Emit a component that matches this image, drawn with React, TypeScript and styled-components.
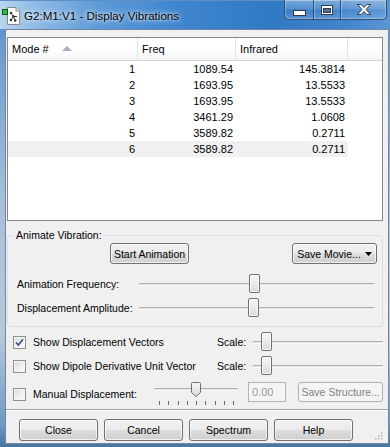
import styled, { createGlobalStyle } from 'styled-components';

const GlobalStyle = createGlobalStyle`
  html, body {
    margin: 0;
    padding: 0;
  }
  body {
    width: 390px;
    height: 447px;
    overflow: hidden;
    font-family: 'Liberation Sans', Arial, sans-serif;
    font-size: 10.5px;
    color: #000;
  }
  * {
    box-sizing: border-box;
  }
`;

const Window = styled.div`
  width: 390px;
  height: 447px;
  display: flex;
  flex-direction: column;
  background: linear-gradient(180deg, #4f8bcb 0%, #6f9dcf 12%, #a9bfd8 45%, #b8c8da 75%, #6f98c2 95%, #45769f 100%);
`;

const TitleBar = styled.div`
  height: 29px;
  flex: none;
  display: flex;
  align-items: flex-start;
  background: linear-gradient(90deg, #b9d5ef 0%, #93bde6 8%, #5e9bd8 25%, #3f86cf 45%, #3279c4 70%, #3f84cc 88%, #5d95d2 100%);
  border-top: 1px solid #5e8fc4;
`;

const TitleIcon = styled.svg`
  margin: 6px 0 0 2px;
  flex: none;
`;

const TitleText = styled.div`
  margin: 7px 0 0 3px;
  font-size: 11.6px;
  line-height: 15px;
  color: #000;
  text-shadow: 0 0 6px rgba(255, 255, 255, 0.95), 0 0 3px rgba(255, 255, 255, 0.8);
`;

const Caption = styled.div`
  margin-left: auto;
  margin-right: 3px;
  margin-top: -1px;
  display: flex;
  height: 20px;
  border: 1px solid #2b4d78;
  border-top: none;
  border-radius: 0 0 5px 5px;
  overflow: hidden;
  box-shadow: inset 0 0 0 1px rgba(255, 255, 255, 0.3);
`;

const CaptionButton = styled.div<{ $w: number }>`
  width: ${(p) => p.$w}px;
  display: flex;
  align-items: center;
  justify-content: center;
  background: linear-gradient(
    180deg,
    rgba(255, 255, 255, 0.32) 0%,
    rgba(255, 255, 255, 0.14) 48%,
    rgba(255, 255, 255, 0.02) 52%,
    rgba(255, 255, 255, 0.16) 100%
  );

  & + & {
    border-left: 1px solid #2b4d78;
    box-shadow: inset 1px 0 rgba(255, 255, 255, 0.3);
  }
`;

const Client = styled.div`
  flex: 1;
  margin: 0 1px 3px 5px;
  background: #f0f0f0;
  border: 1px solid #6f85a2;
  padding: 7px 5px 0 1px;
  display: flex;
  flex-direction: column;
`;

const ListView = styled.div`
  height: 184px;
  flex: none;
  border: 1px solid #828790;
  background: #fff;
  overflow: hidden;
  font-size: 11px;
`;

const HeaderRow = styled.div`
  display: grid;
  grid-template-columns: 130px 98px 112px 1fr;
  height: 23px;
  border-bottom: 1px solid #d5d5d5;
  background: linear-gradient(180deg, #ffffff 0%, #ffffff 55%, #f4f5f7 100%);
`;

const HeaderCell = styled.div<{ $last?: boolean }>`
  display: flex;
  align-items: center;
  padding-left: 4px;
  border-right: ${(p) => (p.$last ? 'none' : '1px solid #e3e4e6')};
`;

const SortArrow = styled.svg`
  margin-left: 13px;
  margin-top: -2px;
`;

const DataRow = styled.div<{ $hot?: boolean }>`
  display: grid;
  grid-template-columns: 130px 98px 112px;
  width: 340px;
  height: 16px;
  line-height: 16px;
  background: ${(p) => (p.$hot ? '#f0f0f0' : 'transparent')};
`;

const DataCell = styled.div`
  text-align: right;
  padding-right: 3px;
`;

const GroupBox = styled.fieldset`
  margin: 8px 0 0 0;
  padding: 1px 0 8px 0;
  border: 1px solid #d5dfe5;
  border-radius: 3px;
  min-width: 0;
`;

const GroupLegend = styled.legend`
  margin-left: 6px;
  padding: 0 2px;
  line-height: 13px;
`;

const ButtonRow = styled.div`
  display: flex;
  justify-content: space-between;
  padding: 0 5px 0 102px;
`;

const Button = styled.button<{ $w: number; $h?: number }>`
  width: ${(p) => p.$w}px;
  height: ${(p) => p.$h ?? 21}px;
  padding: 0;
  font: inherit;
  color: #000;
  border: 1px solid #707070;
  border-radius: 3px;
  background: linear-gradient(180deg, #f2f2f2 0%, #ebebeb 48%, #dddddd 52%, #cfcfcf 100%);
  box-shadow: inset 0 0 0 1px rgba(255, 255, 255, 0.7);
  display: flex;
  align-items: center;
  justify-content: center;
  gap: 4px;

  &:disabled {
    color: #838383;
    border-color: #adb2b5;
    background: #f4f4f4;
    box-shadow: none;
  }
`;

const SliderRow = styled.div<{ $gap: number }>`
  display: grid;
  grid-template-columns: 122px 1fr;
  align-items: center;
  height: 20px;
  margin-top: ${(p) => p.$gap}px;
  padding: 0 8px 0 9px;
`;

const Track = styled.div<{ $h?: number }>`
  position: relative;
  height: ${(p) => p.$h ?? 20}px;
  display: flex;
  align-items: center;
`;

const Channel = styled.div`
  width: 100%;
  height: 3px;
  border-top: 1px solid #b0b0b0;
  border-bottom: 1px solid #fafafa;
  background: #e4e4e4;
`;

const Thumb = styled.div`
  position: absolute;
  top: 0;
  width: 11px;
  height: 19px;
  margin-left: -5px;
  border: 1px solid #707070;
  border-radius: 2px;
  background: linear-gradient(180deg, #f6f6f6 0%, #e9e9e9 50%, #dadada 100%);
  box-shadow: inset 0 0 0 1px rgba(255, 255, 255, 0.8);
`;

const PointerThumb = styled.svg`
  position: absolute;
  top: 0;
  margin-left: -5px;
`;

const Ticks = styled.div`
  display: flex;
  justify-content: space-between;
  padding: 0 4px 0 5px;
  height: 4px;
  margin-top: 4px;
`;

const Tick = styled.div`
  width: 1px;
  height: 4px;
  background: #6a6a6a;
`;

const CheckRow = styled.div<{ $gap: number; $h?: number }>`
  display: flex;
  align-items: center;
  height: ${(p) => p.$h ?? 20}px;
  margin-top: ${(p) => p.$gap}px;
  padding-left: 6px;
`;

const Box = styled.div`
  width: 13px;
  height: 13px;
  flex: none;
  border: 1px solid #8e8f8f;
  background: linear-gradient(135deg, #d8d8d8 0%, #eeeeee 50%, #fbfbfb 100%);
  box-shadow: inset 0 0 0 1px #f6f6f6;
  display: flex;
  align-items: center;
  justify-content: center;
`;

const CheckLabel = styled.div<{ $w: number }>`
  width: ${(p) => p.$w}px;
  flex: none;
  margin-left: 7px;
  white-space: nowrap;
`;

const ScaleLabel = styled.div`
  width: 36px;
  flex: none;
`;

const Grow = styled.div`
  flex: 1;
`;

const ManualBlock = styled.div`
  width: 84px;
  flex: none;
  align-self: flex-start;
`;

const NumberBox = styled.div`
  width: 40px;
  height: 20px;
  margin-left: 10px;
  border: 1px solid #afb4b8;
  background: #f4f4f4;
  color: #9a9a9a;
  padding-left: 3px;
  line-height: 18px;
  align-self: flex-start;
  font-size: 11px;
`;

const Separator = styled.div`
  margin: 3px -5px 0 -1px;
  border-top: 1px solid #a0a0a0;
  border-bottom: 1px solid #ffffff;
`;

const FooterRow = styled.div`
  display: flex;
  gap: 6px;
  margin-top: 8px;
  padding-left: 12px;
  align-items: flex-end;
`;

const Grip = styled.svg`
  margin-left: auto;
  margin-bottom: 1px;
`;

const rows = [
  ['1', '1089.54', '145.3814'],
  ['2', '1693.95', '13.5533'],
  ['3', '1693.95', '13.5533'],
  ['4', '3461.29', '1.0608'],
  ['5', '3589.82', '0.2711'],
  ['6', '3589.82', '0.2711'],
];

const Slider = ({ value }: { value: number }) => (
  <Track>
    <Channel />
    <Thumb style={{ left: `${value * 100}%` }} />
  </Track>
);

const Check = ({ checked }: { checked?: boolean }) => (
  <Box>
    {checked && (
      <svg width="9" height="9" viewBox="0 0 9 9">
        <path d="M1 4.5 L3.4 7 L8 1.2" fill="none" stroke="#3d5289" strokeWidth="1.7" />
      </svg>
    )}
  </Box>
);

export default function App() {
  return (
    <>
      <GlobalStyle />
      <Window>
        <TitleBar>
          <TitleIcon width="19" height="18" viewBox="0 0 19 18">
            <path d="M5.5 0.5 H14 L17.5 4 V17.5 H5.5 Z" fill="#fff" stroke="#8a8a8a" />
            <path d="M14 0.5 V4 H17.5" fill="#e8e8e8" stroke="#8a8a8a" />
            <path d="M9 6 L11.5 9.5 L9 13 M11.5 9.5 L15 9.5 M11.5 9.5 L13 13" fill="none" stroke="#333" strokeWidth="1" />
            <circle cx="9" cy="6" r="1.3" fill="#333" />
            <circle cx="11.5" cy="9.5" r="1.3" fill="#333" />
            <circle cx="9" cy="13" r="1.3" fill="#333" />
            <circle cx="13.2" cy="13.5" r="1.2" fill="#333" />
            <rect x="0.5" y="2.5" width="5" height="5" fill="#22c22e" stroke="#0f5c14" />
          </TitleIcon>
          <TitleText>G2:M1:V1 - Display Vibrations</TitleText>
          <Caption>
            <CaptionButton $w={28}>
              <svg width="13" height="6" viewBox="0 0 13 6" style={{ marginTop: 6 }}>
                <rect x="0.5" y="0.5" width="12" height="5" fill="#fff" stroke="#333c4a" />
              </svg>
            </CaptionButton>
            <CaptionButton $w={27}>
              <svg width="12" height="10" viewBox="0 0 12 10">
                <rect x="0.5" y="0.5" width="11" height="9" fill="#fff" stroke="#333c4a" />
                <rect x="2.5" y="3.5" width="7" height="4" fill="#4a6e98" stroke="#333c4a" />
              </svg>
            </CaptionButton>
            <CaptionButton $w={46}>
              <svg width="14" height="11" viewBox="0 0 14 11">
                <path
                  d="M0.5 0.5 H4 L7 3.5 L10 0.5 H13.5 L9 5.5 L13.5 10.5 H10 L7 7.5 L4 10.5 H0.5 L5 5.5 Z"
                  fill="#fff"
                  stroke="#333c4a"
                  strokeLinejoin="round"
                />
              </svg>
            </CaptionButton>
          </Caption>
        </TitleBar>

        <Client>
          <ListView>
            <HeaderRow>
              <HeaderCell>
                Mode #
                <SortArrow width="10" height="5" viewBox="0 0 10 5">
                  <path d="M0 5 L5 0 L10 5 Z" fill="#a6b0be" />
                </SortArrow>
              </HeaderCell>
              <HeaderCell>Freq</HeaderCell>
              <HeaderCell>Infrared</HeaderCell>
              <HeaderCell $last />
            </HeaderRow>
            {rows.map((r, i) => (
              <DataRow key={r[0]} $hot={i === rows.length - 1}>
                <DataCell>{r[0]}</DataCell>
                <DataCell>{r[1]}</DataCell>
                <DataCell>{r[2]}</DataCell>
              </DataRow>
            ))}
          </ListView>

          <GroupBox>
            <GroupLegend>Animate Vibration:</GroupLegend>
            <ButtonRow>
              <Button $w={79}>Start Animation</Button>
              <Button $w={85}>
                Save Movie...
                <svg width="7" height="4" viewBox="0 0 7 4">
                  <path d="M0 0 H7 L3.5 4 Z" fill="#000" />
                </svg>
              </Button>
            </ButtonRow>
            <SliderRow $gap={10}>
              <span>Animation Frequency:</span>
              <Slider value={0.49} />
            </SliderRow>
            <SliderRow $gap={4}>
              <span>Displacement Amplitude:</span>
              <Slider value={0.485} />
            </SliderRow>
          </GroupBox>

          <CheckRow $gap={5}>
            <Check checked />
            <CheckLabel $w={184}>Show Displacement Vectors</CheckLabel>
            <ScaleLabel>Scale:</ScaleLabel>
            <Grow>
              <Slider value={0.1} />
            </Grow>
          </CheckRow>
          <CheckRow $gap={4}>
            <Check />
            <CheckLabel $w={184}>Show Dipole Derivative Unit Vector</CheckLabel>
            <ScaleLabel>Scale:</ScaleLabel>
            <Grow>
              <Slider value={0.1} />
            </Grow>
          </CheckRow>
          <CheckRow $gap={6} $h={24}>
            <Check />
            <CheckLabel $w={121}>Manual Displacement:</CheckLabel>
            <ManualBlock>
              <Track $h={15}>
                <Channel />
                <PointerThumb width="10" height="15" viewBox="0 0 10 15" style={{ left: '50%' }}>
                  <defs>
                    <linearGradient id="pt" x1="0" y1="0" x2="0" y2="1">
                      <stop offset="0" stopColor="#f6f6f6" />
                      <stop offset="1" stopColor="#dadada" />
                    </linearGradient>
                  </defs>
                  <path d="M1.5 0.5 H8.5 Q9.5 0.5 9.5 1.5 V10.5 L5 14.5 L0.5 10.5 V1.5 Q0.5 0.5 1.5 0.5 Z" fill="url(#pt)" stroke="#707070" />
                </PointerThumb>
              </Track>
              <Ticks>
                {Array.from({ length: 9 }).map((_, i) => (
                  <Tick key={i} />
                ))}
              </Ticks>
            </ManualBlock>
            <NumberBox>0.00</NumberBox>
            <Button $w={89} $h={20} disabled style={{ marginLeft: 12, alignSelf: 'flex-start' }}>
              Save Structure...
            </Button>
          </CheckRow>

          <Separator />

          <FooterRow>
            <Button $w={79} $h={22}>Close</Button>
            <Button $w={79} $h={22}>Cancel</Button>
            <Button $w={79} $h={22}>Spectrum</Button>
            <Button $w={79} $h={22}>Help</Button>
            <Grip width="9" height="9" viewBox="0 0 9 9">
              {[
                [7, 1],
                [4, 4],
                [7, 4],
                [1, 7],
                [4, 7],
                [7, 7],
              ].map(([x, y]) => (
                <rect key={`${x}-${y}`} x={x} y={y} width="1.5" height="1.5" fill="#b8b8b8" />
              ))}
            </Grip>
          </FooterRow>
        </Client>
      </Window>
    </>
  );
}
